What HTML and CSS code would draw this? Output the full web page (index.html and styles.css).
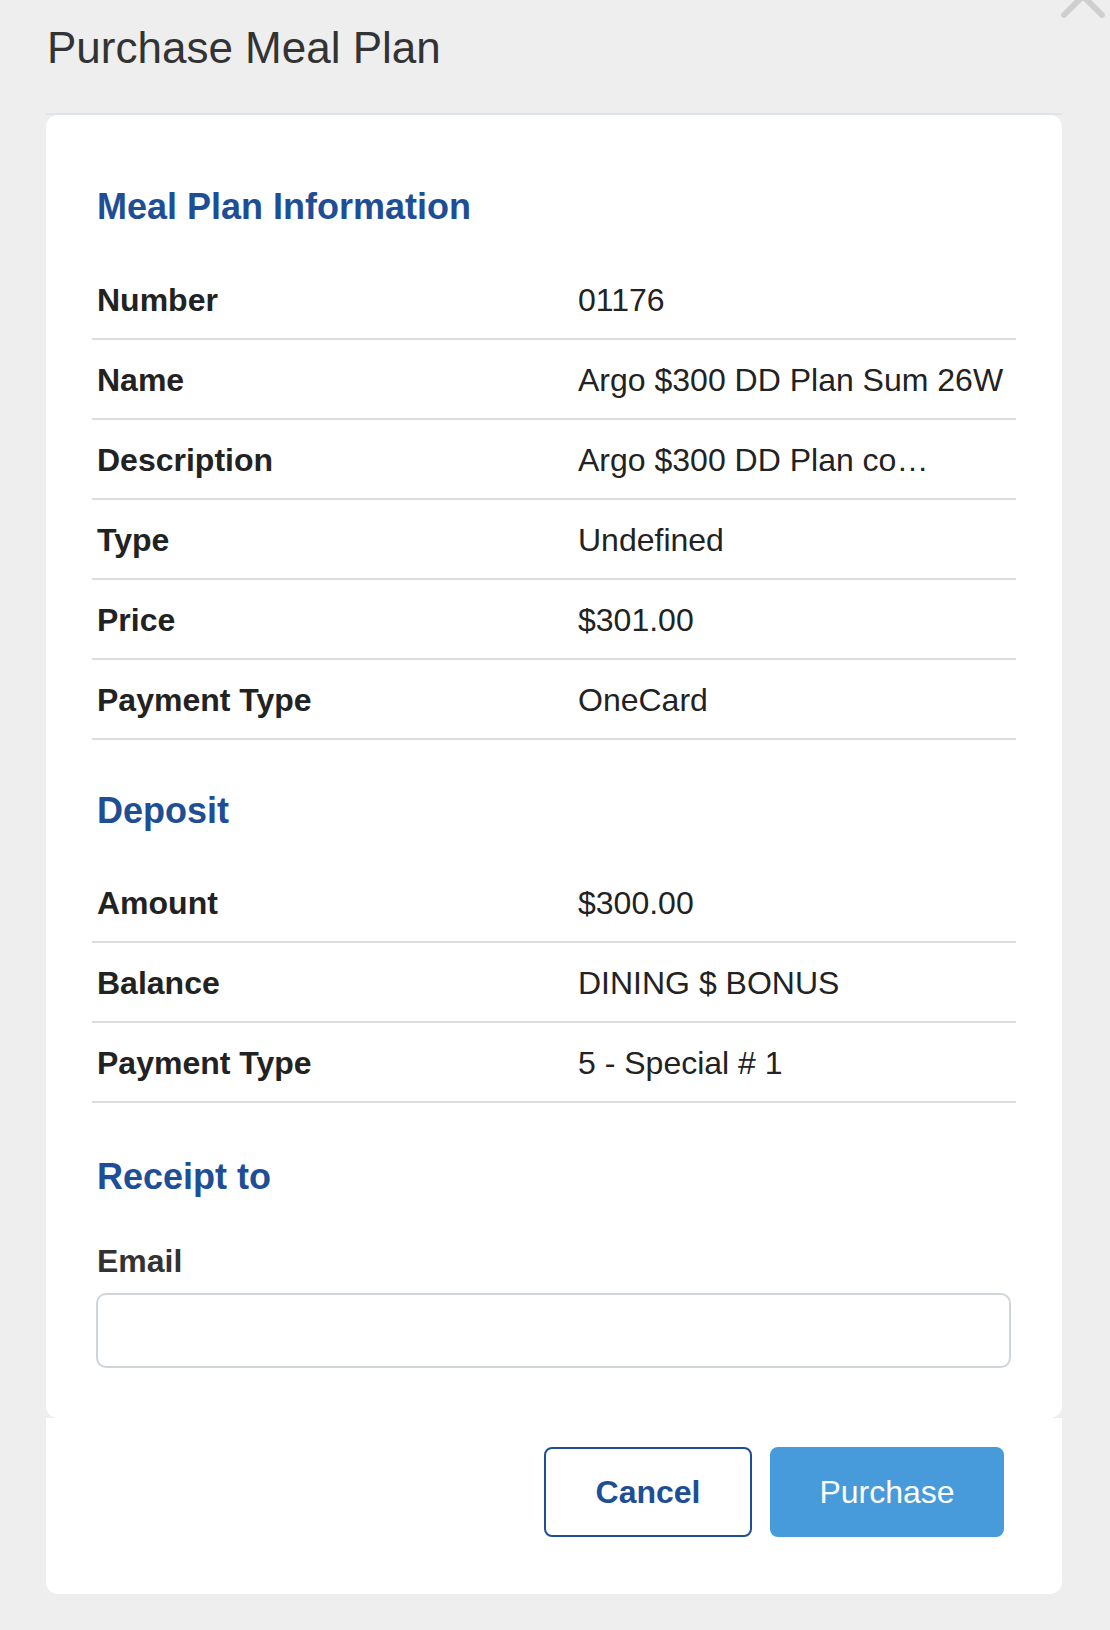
FILE: index.html
```html
<!DOCTYPE html>
<html lang="en">
<head>
    <meta charset="UTF-8">
    <meta name="viewport" content="width=device-width, initial-scale=1.0">
    <title>Purchase Meal Plan</title>
    <link rel="stylesheet" href="styles.css">
</head>
<body>
<div class="page">
    <button class="close-btn" aria-label="Close">
        <svg width="50" height="50" viewBox="0 0 50 50">
            <path d="M6 6 L44 44 M44 6 L6 44" stroke="#cfcfcf" stroke-width="6" stroke-linecap="round" fill="none"/>
        </svg>
    </button>

    <h1 class="title">Purchase Meal Plan</h1>

    <div class="modal">
        <div class="modal-body">
            <h2 class="section-title first">Meal Plan Information</h2>
            <div class="row"><div class="label">Number</div><div class="value">01176</div></div>
            <div class="row"><div class="label">Name</div><div class="value">Argo $300 DD Plan Sum 26W</div></div>
            <div class="row"><div class="label">Description</div><div class="value">Argo $300 DD Plan co…</div></div>
            <div class="row"><div class="label">Type</div><div class="value">Undefined</div></div>
            <div class="row"><div class="label">Price</div><div class="value">$301.00</div></div>
            <div class="row"><div class="label">Payment Type</div><div class="value">OneCard</div></div>

            <h2 class="section-title">Deposit</h2>
            <div class="row"><div class="label">Amount</div><div class="value">$300.00</div></div>
            <div class="row"><div class="label">Balance</div><div class="value">DINING $ BONUS</div></div>
            <div class="row"><div class="label">Payment Type</div><div class="value">5 - Special # 1</div></div>

            <h2 class="section-title receipt">Receipt to</h2>
            <label class="field-label" for="email">Email</label>
            <input class="field-input" id="email" type="email">
        </div>

        <div class="modal-footer">
            <button class="btn btn-cancel">Cancel</button>
            <button class="btn btn-purchase">Purchase</button>
        </div>
    </div>
</div>
</body>
</html>
```

FILE: styles.css
```css
body {
    margin: 0;
    background-color: #eeeeee;
    font-family: 'Liberation Sans', Arial, Helvetica, sans-serif;
    color: #222222;
}

.page {
    position: relative;
    padding: 23px 48px 35px 46px;
}

/* close X, mostly cut off at the top */
.close-btn {
    position: absolute;
    top: -29px;
    left: 1058px;
    width: 50px;
    height: 50px;
    padding: 0;
    border: none;
    background: none;
}

.title {
    margin: 0 0 40px 1px;
    font-size: 44px;
    line-height: 50px;
    font-weight: normal;
    color: #333333;
}

.modal {
    border-top: 2px solid #dfe4e9;
}

.modal-body {
    background-color: #ffffff;
    border-radius: 12px;
    padding: 24px 46px 50px 46px;
}

.section-title {
    margin: 49px 0 30px 0;
    padding-left: 5px;
    font-size: 36px;
    line-height: 44px;
    font-weight: bold;
    color: #1e4e95;
}

.section-title.first {
    margin-top: 46px;
    margin-bottom: 31px;
}

.section-title.receipt {
    margin-top: 52px;
    margin-bottom: 44px;
}

.row {
    display: grid;
    grid-template-columns: 481px 1fr;
    padding: 22px 5px 20px 5px;
    font-size: 32px;
    line-height: 36px;
    border-bottom: 2px solid #dddddd;
}

.label {
    font-weight: bold;
    color: #222222;
}

.value {
    color: #222222;
    white-space: nowrap;
}

.field-label {
    display: block;
    margin: 0 0 14px 5px;
    font-size: 32px;
    line-height: 36px;
    font-weight: bold;
    color: #333333;
}

.field-input {
    display: block;
    box-sizing: border-box;
    width: 915px;
    height: 75px;
    margin-left: 4px;
    border: 2px solid #d0d5da;
    border-radius: 10px;
    background: #ffffff;
    font-size: 32px;
    font-family: inherit;
}

.modal-footer {
    display: flex;
    justify-content: flex-end;
    gap: 18px;
    background-color: #ffffff;
    border-radius: 0 0 12px 12px;
    padding: 29px 58px 57px 0;
}

.btn {
    height: 90px;
    border-radius: 8px;
    font-size: 32px;
    font-family: inherit;
    cursor: pointer;
}

.btn-cancel {
    width: 208px;
    border: 2px solid #1e4e95;
    background-color: #ffffff;
    color: #1e4e95;
    font-weight: bold;
}

.btn-purchase {
    width: 234px;
    border: none;
    background-color: #489bda;
    color: #ffffff;
}
```
